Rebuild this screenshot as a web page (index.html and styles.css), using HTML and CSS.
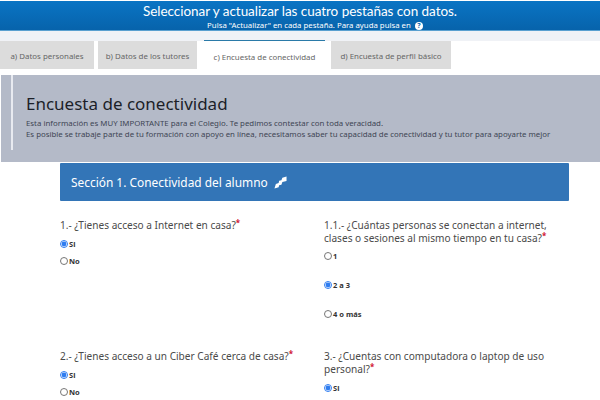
FILE: index.html
```html
<!DOCTYPE html>
<html lang="es">
<head>
    <meta charset="UTF-8">
    <title>Encuesta de conectividad</title>
    <link rel="stylesheet" href="styles.css">
</head>
<body>
    <!-- Top banner -->
    <header class="banner">
        <h1 class="banner-title">Seleccionar y actualizar las cuatro pestañas con datos.</h1>
        <p class="banner-sub">Pulsa "Actualizar" en cada pestaña. Para ayuda pulsa en <span class="help-icon">?</span></p>
    </header>

    <!-- Tabs -->
    <nav class="tabs">
        <a class="tab tab-a">a) Datos personales</a>
        <a class="tab tab-b">b) Datos de los tutores</a>
        <a class="tab tab-c active">c) Encuesta de conectividad</a>
        <a class="tab tab-d">d) Encuesta de perfil básico</a>
    </nav>

    <!-- Intro -->
    <section class="intro">
        <div class="intro-inner">
            <h2 class="intro-title">Encuesta de conectividad</h2>
            <p class="intro-text">Esta información es MUY IMPORTANTE para el Colegio. Te pedimos contestar con toda veracidad.<br>Es posible se trabaje parte de tu formación con apoyo en línea, necesitamos saber tu capacidad de conectividad y tu tutor para apoyarte mejor</p>
        </div>
    </section>

    <main class="content">
        <div class="section-bar">
            <span>Sección 1. Conectividad del alumno</span>
            <svg class="section-icon" viewBox="0 0 14 14" width="13" height="13">
                <path d="M0.5 13.5 L5 12 L5.5 10 L8 9.5 L9 6.5 L13.5 5.5 L13.5 0.5 L9 2 L8 4.5 L5.5 5 L5 7.5 L2 8.5 Z" fill="#fff"/>
            </svg>
        </div>

        <div class="questions">
            <div class="question q-first">
                <p class="question-label">1.- ¿Tienes acceso a Internet en casa?<span class="req">*</span></p>
                <label class="option"><input type="radio" name="q1" checked>Si</label>
                <label class="option"><input type="radio" name="q1">No</label>
            </div>
            <div class="question q-first">
                <p class="question-label">1.1.- ¿Cuántas personas se conectan a internet, clases o sesiones al mismo tiempo en tu casa?<span class="req">*</span></p>
                <label class="option wide"><input type="radio" name="q11">1</label>
                <label class="option wide"><input type="radio" name="q11" checked>2 a 3</label>
                <label class="option wide"><input type="radio" name="q11">4 o más</label>
            </div>
            <div class="question">
                <p class="question-label">2.- ¿Tienes acceso a un Ciber Café cerca de casa?<span class="req">*</span></p>
                <label class="option"><input type="radio" name="q2" checked>Si</label>
                <label class="option"><input type="radio" name="q2">No</label>
            </div>
            <div class="question">
                <p class="question-label">3.- ¿Cuentas con computadora o laptop de uso personal?<span class="req">*</span></p>
                <label class="option"><input type="radio" name="q3" checked>Si</label>
            </div>
        </div>
    </main>
</body>
</html>
```

FILE: styles.css
```css
html, body {
    height: 400px;
    overflow: hidden;
}
body {
    margin: 0;
    font-family: "Noto Sans", Arial, sans-serif;
    background-color: #fff;
    color: #444;
}
.banner {
    margin-top: 1px;
    height: 29px;
    background: linear-gradient(#0a74c4, #0763ab);
    border-bottom: 1px solid #5aa0d0;
    color: #fff;
    text-align: center;
}
.banner-title {
    margin: 0;
    padding-top: 1px;
    font-family: Lato, "Noto Sans", sans-serif;
    font-size: 13.5px;
    line-height: 18px;
    font-weight: 400;
    letter-spacing: -0.05px;
}
.banner-sub {
    margin: 0;
    padding-left: 30px;
    font-size: 7.8px;
    line-height: 10px;
}
.help-icon {
    display: inline-block;
    width: 8px;
    height: 8px;
    margin-left: 2px;
    border-radius: 50%;
    background-color: #fff;
    color: #0763ab;
    font-size: 7px;
    line-height: 8px;
    font-weight: 700;
}
.tabs {
    display: flex;
    height: 34px;
    border-top: 10px solid #f0f2f6;
    background-color: #fff;
}
.tab {
    height: 28px;
    font-size: 7.9px;
    line-height: 31px;
    text-align: center;
    background-color: #dcdcdc;
    color: #666;
}
.tab-a {
    width: 94px;
    margin-right: 4px;
}
.tab-b {
    width: 99px;
    margin-right: 7px;
}
.tab-c {
    width: 121px;
    margin-right: 6px;
}
.tab-d {
    width: 120px;
}
.tab.active {
    height: 33px;
    line-height: 32px;
    background-color: #fff;
    border-top: 1px solid #2a7aa8;
    margin-top: -1px;
}
.intro {
    height: 87px;
    margin-left: 1px;
    background-color: #b4bac8;
}
.intro-inner {
    height: 75px;
    margin-left: 10px;
    padding-left: 13px;
    border-left: 2px solid #e8eaf0;
}
.intro-title {
    margin: 0;
    padding-top: 17px;
    font-size: 17px;
    line-height: 24px;
    font-weight: 400;
    color: #1c1f28;
}
.intro-text {
    margin: 2px 0 0;
    font-size: 7.85px;
    line-height: 11px;
    color: #3e4554;
}
.content {
    padding: 1px 31px 0 60px;
}
.section-bar {
    display: flex;
    align-items: center;
    gap: 6px;
    height: 38px;
    padding-left: 11px;
    background-color: #3375b7;
    color: #fff;
    font-size: 11.9px;
    border-radius: 1px;
}
.questions {
    display: grid;
    grid-template-columns: 264px 245px;
    margin-top: 18px;
}
.question {
    display: flex;
    flex-direction: column;
    align-items: flex-start;
    height: 140px;
}
.q-first {
    height: 131px;
}
.question-label {
    margin: 0 0 4px;
    font-size: 10.1px;
    line-height: 12.5px;
    color: #4a4a4a;
}
.req {
    font-size: 8px;
    line-height: 8px;
    vertical-align: top;
    color: #d01030;
    font-weight: 700;
}
.option {
    display: flex;
    align-items: center;
    height: 17px;
    font-size: 7.5px;
    font-weight: 700;
    color: #333;
}
.option.wide {
    margin-bottom: 12px;
}
.option.wide:first-of-type {
    margin-top: -1px;
}
.option input {
    width: 8px;
    height: 8px;
    margin: 0 1px 0 0;
    accent-color: #2f7df0;
}
```
